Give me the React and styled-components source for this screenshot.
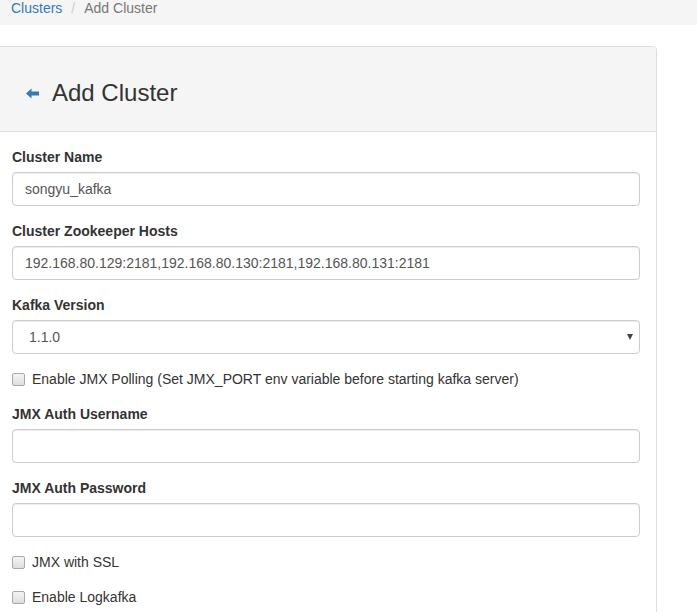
import React from "react";
import styled, { createGlobalStyle } from "styled-components";

const GlobalStyle = createGlobalStyle`
	html, body {
		margin: 0;
		padding: 0;
		background: #fff;
		overflow: hidden;
	}
	body {
		font-family: "Liberation Sans", Arial, Helvetica, sans-serif;
		font-size: 14px;
		line-height: 20px;
		color: #333;
	}
	* {
		box-sizing: border-box;
	}
`;

function ArrowLeft() {
	return (
		<svg width='13' height='11' viewBox='0 0 13 11'>
			<path d='M0 5.5 L5.5 0.5 L5.5 3.5 L13 3.5 L13 7.5 L5.5 7.5 L5.5 10.5 Z' fill='#337ab7' />
		</svg>
	);
}

function App() {
	return (
		<Page>
			<GlobalStyle />
			<Breadcrumb>
				<Crumb href='#'>Clusters</Crumb>
				<Divider>/</Divider>
				<Current>Add Cluster</Current>
			</Breadcrumb>

			<Panel>
				<PanelHeading>
					<ArrowLeft />
					<Title>Add Cluster</Title>
				</PanelHeading>
				<PanelBody>
					<FormGroup>
						<Label>Cluster Name</Label>
						<Input defaultValue='songyu_kafka' />
					</FormGroup>
					<FormGroup>
						<Label>Cluster Zookeeper Hosts</Label>
						<Input defaultValue='192.168.80.129:2181,192.168.80.130:2181,192.168.80.131:2181' />
					</FormGroup>
					<FormGroup>
						<Label>Kafka Version</Label>
						<SelectWrap>
							<Select defaultValue='1.1.0'>
								<option>1.1.0</option>
							</Select>
							<Caret />
						</SelectWrap>
					</FormGroup>
					<CheckRow>
						<CheckBox type='checkbox' />
						Enable JMX Polling (Set JMX_PORT env variable before starting kafka server)
					</CheckRow>
					<FormGroup>
						<Label>JMX Auth Username</Label>
						<Input />
					</FormGroup>
					<FormGroup>
						<Label>JMX Auth Password</Label>
						<Input type='password' />
					</FormGroup>
					<CheckRow>
						<CheckBox type='checkbox' />
						JMX with SSL
					</CheckRow>
					<CheckRow>
						<CheckBox type='checkbox' />
						Enable Logkafka
					</CheckRow>
				</PanelBody>
			</Panel>
		</Page>
	);
}

export default App;

const Page = styled.div`
	width: 697px;
	height: 612px;
	overflow: hidden;
`;

const Breadcrumb = styled.div`
	margin: -10px 0 21px;
	padding: 8px 11px 7px;
	height: 35px;
	background: #f5f5f5;
	display: flex;
	align-items: center;
`;

const Crumb = styled.a`
	color: #337ab7;
	text-decoration: none;
`;

const Divider = styled.span`
	color: #ccc;
	padding: 0 9px 0 9px;
`;

const Current = styled.span`
	color: #777;
`;

const Panel = styled.div`
	margin-left: -1px;
	width: 658px;
	border: 1px solid #ddd;
	border-radius: 0 4px 0 0;
	background: #fff;
`;

const PanelHeading = styled.div`
	display: flex;
	align-items: center;
	gap: 13px;
	height: 85px;
	padding: 8px 0 0 26px;
	background: #f5f5f5;
	border-bottom: 1px solid #ddd;
	border-radius: 0 3px 0 0;
`;

const Title = styled.h3`
	margin: 0;
	font-size: 24px;
	font-weight: 500;
	line-height: 26px;
	color: #333;
`;

const PanelBody = styled.div`
	padding: 15px 16px 15px 12px;
`;

const FormGroup = styled.div`
	margin-bottom: 15px;
`;

const Label = styled.label`
	display: block;
	margin-bottom: 5px;
	font-weight: bold;
	line-height: 20px;
`;

const Input = styled.input`
	display: block;
	width: 100%;
	height: 34px;
	padding: 6px 12px;
	font-family: inherit;
	font-size: 14px;
	line-height: 20px;
	color: #555;
	background: #fff;
	border: 1px solid #ccc;
	border-radius: 4px;
	box-shadow: inset 0 1px 1px rgba(0, 0, 0, 0.075);
	outline: none;
`;

const SelectWrap = styled.div`
	position: relative;
`;

const Select = styled.select`
	display: block;
	width: 100%;
	height: 34px;
	padding: 6px 12px 6px 16px;
	font-family: inherit;
	font-size: 14px;
	color: #555;
	background: #fff;
	border: 1px solid #ccc;
	border-radius: 4px;
	box-shadow: inset 0 1px 1px rgba(0, 0, 0, 0.075);
	appearance: none;
	outline: none;
`;

const Caret = styled.span`
	position: absolute;
	right: 7px;
	top: 14px;
	width: 0;
	height: 0;
	border-left: 3.5px solid transparent;
	border-right: 3.5px solid transparent;
	border-top: 6px solid #444;
`;

const CheckRow = styled.label`
	display: flex;
	align-items: center;
	height: 20px;
	margin-bottom: 15px;
	color: #333;
`;

const CheckBox = styled.input`
	appearance: none;
	width: 13px;
	height: 13px;
	margin: 0 7px 0 0;
	border: 1px solid #a9a9a9;
	border-radius: 2px;
	background: linear-gradient(#f4f4f4, #dedede);
`;
